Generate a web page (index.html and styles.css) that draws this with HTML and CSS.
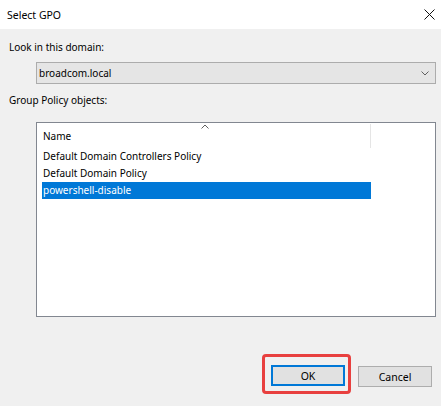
FILE: index.html
```html
<!DOCTYPE html>
<html>
<head>
<meta charset="utf-8">
<link rel="stylesheet" href="styles.css">
</head>
<body>
<div class="window">
  <div class="titlebar">
    <span class="title">Select GPO</span>
    <svg class="close" width="11" height="11" viewBox="0 0 11 11"><path d="M0.5 0.5L10.5 10.5M10.5 0.5L0.5 10.5" stroke="#111" stroke-width="1" fill="none"/></svg>
  </div>
  <div class="content">
    <div class="label first">Look in this domain:</div>
    <div class="combo">
      <span class="combo-text">broadcom.local</span>
      <svg class="chev" width="8" height="5" viewBox="0 0 8 5"><path d="M0.5 0.5L4 4L7.5 0.5" stroke="#606060" stroke-width="1" fill="none"/></svg>
    </div>
    <div class="label second">Group Policy objects:</div>
    <div class="listbox">
      <div class="header">
        <div class="col-name">
          <svg class="sort" width="8" height="5" viewBox="0 0 8 5"><path d="M0.5 4.5L4 1L7.5 4.5" stroke="#606060" stroke-width="1" fill="none"/></svg>
          <span>Name</span>
        </div>
      </div>
      <div class="rows">
        <div class="row">Default Domain Controllers Policy</div>
        <div class="row">Default Domain Policy</div>
        <div class="row selected">powershell-disable</div>
      </div>
    </div>
    <div class="buttons">
      <div class="highlight"><button class="btn ok">OK</button></div>
      <button class="btn cancel">Cancel</button>
    </div>
  </div>
</div>
</body>
</html>
```
FILE: styles.css
```css
html, body { margin: 0; padding: 0; }
body {
  width: 441px;
  height: 406px;
  font-family: "Noto Sans", "Open Sans", sans-serif;
  font-size: 10px;
  color: #000;
  background: #f0f0f0;
  overflow: hidden;
}
.window { width: 441px; height: 406px; display: flex; flex-direction: column; }
.titlebar {
  height: 29px;
  background: #fff;
  display: flex;
  align-items: center;
  justify-content: space-between;
  padding: 0 6px 0 7px;
  box-sizing: border-box;
  flex: none;
}
.title { font-size: 10.5px; line-height: 16px; }
.close { display: block; }
.content {
  flex: 1;
  background: #f0f0f0;
  display: flex;
  flex-direction: column;
  padding: 0 0 0 9px;
}
.label { line-height: 16px; }
.label.first { margin-top: 10px; }
.combo {
  margin: 7px 0 0 27px;
  width: 400px;
  height: 22px;
  box-sizing: border-box;
  border: 1px solid #acacac;
  background: #e5e5e5;
  display: flex;
  align-items: center;
  justify-content: space-between;
  padding: 0 6px 0 2px;
}
.combo-text { line-height: 16px; }
.chev { display: block; }
.label.second { margin-top: 8px; }
.listbox {
  margin: 14px 0 0 27px;
  width: 400px;
  height: 195px;
  box-sizing: border-box;
  border: 1px solid #828790;
  background: #fff;
  padding: 0 0 0 5px;
}
.header { height: 25px; display: flex; }
.col-name {
  width: 329px;
  height: 24px;
  margin-top: 1px;
  border-right: 1px solid #e5e5e5;
  position: relative;
  padding: 4px 0 0 1px;
  box-sizing: border-box;
}
.col-name span { display: block; line-height: 16px; }
.sort { position: absolute; left: 159px; top: 0px; }
.row {
  width: 329px;
  height: 17px;
  line-height: 17px;
  padding-left: 1px;
  box-sizing: border-box;
}
.row.selected { background: #0078d7; color: #fff; }
.buttons {
  margin-top: 37px;
  display: flex;
  justify-content: flex-end;
  align-items: flex-start;
  padding-right: 9px;
}
.highlight {
  border: 3px solid #e8403f;
  border-radius: 4px;
  padding: 8px 3px 5px 6px;
  margin-right: 7px;
  display: flex;
}
.btn {
  width: 74px;
  height: 21px;
  font-family: inherit;
  font-size: 10.5px;
  background: #e1e1e1;
  border: 1px solid #adadad;
  padding: 0;
  margin: 0;
  line-height: 16px;
  color: #000;
  box-sizing: border-box;
}
.btn.ok { border: 2px solid #0078d7; }
.btn.cancel { margin-top: 12px; }
```
